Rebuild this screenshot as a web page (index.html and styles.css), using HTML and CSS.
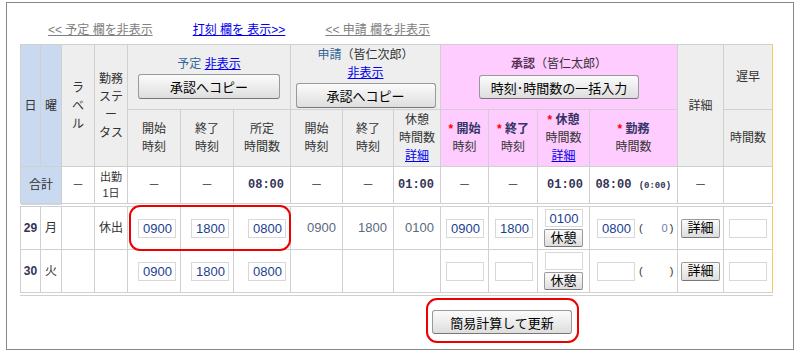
FILE: index.html
```html
<!DOCTYPE html>
<html lang="ja">
<head>
    <meta charset="UTF-8">
    <title>勤務表</title>
    <link rel="stylesheet" href="styles.css">
</head>
<body>

    <div class="frame">
        <div class="toggles">
            <a href="#" class="off">&lt;&lt; 予定 欄を非表示</a>
            <a href="#" class="on">打刻 欄を 表示&gt;&gt;</a>
            <a href="#" class="off">&lt;&lt; 申請 欄を非表示</a>
        </div>

        <table class="sheet">
            <colgroup>
                <col style="width: 20px">
                <col style="width: 21px">
                <col style="width: 33px">
                <col style="width: 33px">
                <col style="width: 53px">
                <col style="width: 53px">
                <col style="width: 57px">
                <col style="width: 52px">
                <col style="width: 51px">
                <col style="width: 47px">
                <col style="width: 48px">
                <col style="width: 49px">
                <col style="width: 52px">
                <col style="width: 88px">
                <col style="width: 46px">
                <col style="width: 49px">
            </colgroup>
            <thead>
                <tr class="head-top">
                    <th rowspan="2" class="day">日</th>
                    <th rowspan="2" class="day">曜</th>
                    <th rowspan="2" class="sep">ラ<br>ベ<br>ル</th>
                    <th rowspan="2">勤務<br>ステ<br>ー<br>タス</th>
                    <th colspan="3" class="sep">
                        <div class="group-title"><span class="plan">予定</span> <a href="#">非表示</a></div>
                        <button type="button" class="btn copy">承認へコピー</button>
                    </th>
                    <th colspan="3" class="sep">
                        <div class="group-title"><span class="plan">申請</span>（皆仁次郎）</div>
                        <div class="group-title"><a href="#">非表示</a></div>
                        <button type="button" class="btn copy narrow">承認へコピー</button>
                    </th>
                    <th colspan="4" class="sep appr">
                        <div class="group-title"><b class="appr-name">承認</b>（皆仁太郎）</div>
                        <button type="button" class="btn bulk">時刻･時間数の一括入力</button>
                    </th>
                    <th rowspan="2">詳細</th>
                    <th class="sep sep-r">遅早</th>
                </tr>
                <tr class="head-sub">
                    <th class="sep">開始<br>時刻</th>
                    <th>終了<br>時刻</th>
                    <th>所定<br>時間数</th>
                    <th class="sep">開始<br>時刻</th>
                    <th>終了<br>時刻</th>
                    <th>休憩<br>時間数<br><a href="#">詳細</a></th>
                    <th class="sep appr"><span class="req">*</span> <b>開始</b><br>時刻</th>
                    <th class="appr"><span class="req">*</span> <b>終了</b><br>時刻</th>
                    <th class="appr"><span class="req">*</span> <b>休憩</b><br>時間数<br><a href="#">詳細</a></th>
                    <th class="appr"><span class="req">*</span> <b>勤務</b><br>時間数</th>
                    <th class="sep sep-r">時間数</th>
                </tr>
            </thead>
            <tbody>
                <tr class="total">
                    <td colspan="2" class="day">合計</td>
                    <td class="sep">－</td>
                    <td class="small">出勤<br>1日</td>
                    <td class="sep">－</td>
                    <td>－</td>
                    <td class="num">08:00</td>
                    <td class="sep">－</td>
                    <td>－</td>
                    <td class="num">01:00</td>
                    <td class="sep">－</td>
                    <td>－</td>
                    <td class="num">01:00</td>
                    <td class="num">08:00 <small>(0:00)</small></td>
                    <td>－</td>
                    <td class="sep sep-r"></td>
                </tr>
                <tr class="day-row first">
                    <td class="date">29</td>
                    <td>月</td>
                    <td class="sep"></td>
                    <td>休出</td>
                    <td class="sep in"><input type="text" value="0900"></td>
                    <td class="in"><input type="text" value="1800"></td>
                    <td class="in"><input type="text" value="0800"></td>
                    <td class="sep plain">0900</td>
                    <td class="plain">1800</td>
                    <td class="plain">0100</td>
                    <td class="sep in"><input type="text" value="0900"></td>
                    <td class="in"><input type="text" value="1800"></td>
                    <td class="rest"><input type="text" value="0100"><button type="button" class="btn mini">休憩</button></td>
                    <td class="work"><input type="text" value="0800"><span class="paren">(<span class="diff">0</span>)</span></td>
                    <td><button type="button" class="btn mini">詳細</button></td>
                    <td class="sep sep-r"><input type="text"></td>
                </tr>
                <tr class="day-row last">
                    <td class="date">30</td>
                    <td>火</td>
                    <td class="sep"></td>
                    <td></td>
                    <td class="sep in"><input type="text" value="0900"></td>
                    <td class="in"><input type="text" value="1800"></td>
                    <td class="in"><input type="text" value="0800"></td>
                    <td class="sep plain"></td>
                    <td class="plain"></td>
                    <td class="plain"></td>
                    <td class="sep in"><input type="text"></td>
                    <td class="in"><input type="text"></td>
                    <td class="rest"><input type="text"><button type="button" class="btn mini">休憩</button></td>
                    <td class="work"><input type="text"><span class="paren">(<span class="diff"></span>)</span></td>
                    <td><button type="button" class="btn mini">詳細</button></td>
                    <td class="sep sep-r"><input type="text"></td>
                </tr>
            </tbody>
        </table>

        <div class="actions">
            <button type="button" class="btn update">簡易計算して更新</button>
        </div>

        <!-- red marks drawn over the sheet -->
        <div class="mark mark-plan"></div>
        <div class="mark mark-update"></div>
    </div>

</body>
</html>
```

FILE: styles.css
```css
body {
    margin: 0;
    font-family: "Liberation Sans", "Noto Sans CJK JP", sans-serif;
    font-size: 12px;
    color: #333;
    background-color: #fff;
}

.frame {
    position: relative;
    margin: 2px 0 0 6px;
    width: 786px;
    height: 346px;
    border: 1px solid #888;
}

.toggles {
    display: flex;
    gap: 40px;
    padding: 19px 0 0 41px;
    height: 22px;
    line-height: 16px;
}

.toggles a {
    color: #808080;
    text-decoration: underline;
}

.toggles a.on {
    color: #0000ee;
}

.sheet {
    margin-left: 13px;
    border-collapse: collapse;
    table-layout: fixed;
    width: 753px;
}

.sheet th,
.sheet td {
    border: 1px solid #d0d0d0;
    padding: 0;
    text-align: center;
    vertical-align: middle;
    font-weight: normal;
    line-height: 18px;
    white-space: nowrap;
}

.sheet thead th {
    background-color: #eee;
}

.sheet a {
    color: #0000ee;
    text-decoration: underline;
}

.sheet .day {
    background-color: #c9d9ef;
}

.sheet .appr {
    background-color: #ffccff;
}

.sheet .sep {
    border-left-color: #f8c760;
}

.sheet .sep-r {
    border-right-color: #f8c760;
}

.head-top th {
    height: 64px;
}

.head-sub th {
    height: 56px;
}

.group-title .plan {
    color: #336699;
}

.appr-name {
    color: #553355;
}

.head-sub b {
    color: #333366;
}

.req {
    color: #ff0000;
    font-weight: bold;
}

/* buttons */
.btn {
    font-family: "Liberation Sans", "Noto Sans CJK JP", sans-serif;
    font-size: 13px;
    color: #000;
    background: linear-gradient(#fbfbfb, #dedede);
    border: 1px solid #999;
    border-bottom-color: #777;
    border-radius: 3px;
    padding: 0;
    cursor: pointer;
}

.btn.copy {
    display: block;
    width: 142px;
    height: 25px;
    margin: 1px auto 0;
}

.btn.copy.narrow {
    width: 140px;
}

.btn.bulk {
    display: block;
    width: 160px;
    height: 24px;
    margin: 2px auto 0;
}

.btn.mini {
    width: 39px;
    height: 19px;
    border-radius: 2px;
    line-height: 16px;
}

.btn.update {
    width: 140px;
    height: 24px;
}

/* total row */
.total td {
    height: 36px;
    background-color: #fff;
}

.total td.day {
    background-color: #c9d9ef;
}

.total .small {
    font-size: 11px;
    line-height: 16px;
}

.sheet .num {
    text-align: right;
    padding-right: 6px;
    font-family: "Liberation Mono", monospace;
    font-weight: bold;
    font-size: 12px;
    color: #333355;
}

.sheet .num small {
    font-size: 9px;
}

/* day rows */
.day-row td {
    height: 42px;
}

.day-row.first td {
    border-top: 4px double #d0d0d0;
}

.day-row.last td {
    border-bottom: 4px double #d0d0d0;
}

.sheet .date {
    font-weight: bold;
    font-size: 12px;
    color: #333355;
}

.sheet input {
    box-sizing: border-box;
    width: 38px;
    height: 19px;
    border: 1px solid #d8d8d8;
    padding: 0 3px;
    font-family: "Liberation Sans", sans-serif;
    font-size: 13px;
    color: #1b3f8f;
    text-align: right;
    vertical-align: middle;
}

.sheet .in {
    text-align: right;
    padding-right: 4px;
}

.sheet .plain {
    text-align: right;
    padding-right: 6px;
    font-size: 13px;
    color: #5a6a80;
}

.sheet .rest input {
    display: block;
    margin: 0 auto;
    height: 18px;
}

.sheet .rest .btn.mini {
    display: block;
    margin: 2px auto 0;
    height: 18px;
}

.sheet .work {
    text-align: left;
    padding-left: 7px;
}

.paren {
    display: inline-block;
    margin-left: 4px;
    font-size: 11px;
    color: #333;
    vertical-align: middle;
}

.paren .diff {
    display: inline-block;
    width: 25px;
    text-align: right;
    padding-right: 2px;
    color: #6680aa;
}

.actions {
    padding: 14px 0 0 425px;
}

/* red annotation rings */
.mark {
    position: absolute;
    border: 2px solid #ee0000;
    border-radius: 11px;
}

.mark-plan {
    left: 122px;
    top: 202px;
    width: 158px;
    height: 42px;
}

.mark-update {
    left: 419px;
    top: 295px;
    width: 149px;
    height: 41px;
}
```
